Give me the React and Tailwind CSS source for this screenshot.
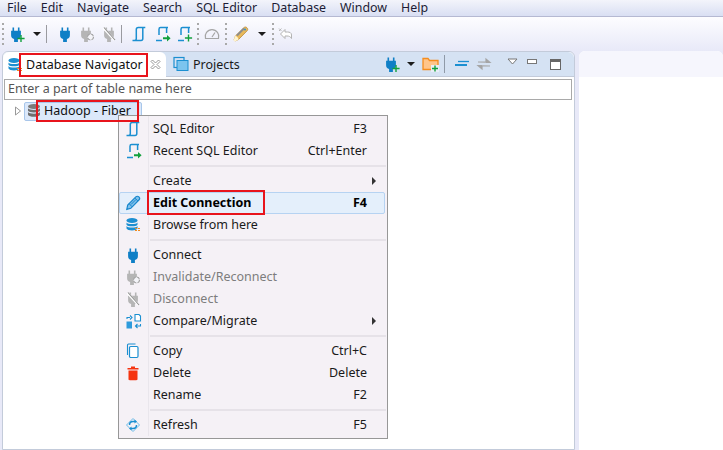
const font = { fontFamily: '"Noto Sans", "Open Sans", sans-serif' };

const Plug = ({ c = "#0f7fc6", x = 0, y = 0, s = 1 }) => (
  <path transform={`translate(${x} ${y}) scale(${s})`} d="M4.5 1.5h1.6v3.2h3.8V1.5h1.6v3.2h1.4v4.6c0 2-1.2 3.4-3 3.8v2.9H6.1v-2.9c-1.8-.4-3-1.8-3-3.8V4.7h1.4z" fill={c} />
);
const PlusG = ({ x, y, r = 3.6 }) => (
  <path d={`M${x - r} ${y}h${2 * r}M${x} ${y - r}v${2 * r}`} stroke="#12a03c" strokeWidth="1.4" fill="none" />
);
const I = ({ children, w = 16, h = 16, className = "" }) => (
  <svg width={w} height={h} viewBox={`0 0 ${w} ${h}`} className={`shrink-0 ${className}`}>{children}</svg>
);
const PlugAdd = () => (
  <I w={17} h={17}><Plug x={-1} /><PlusG x={12} y={12.5} /></I>
);
const PlugBlue = () => <I><Plug /></I>;
const PlugReconnect = () => (
  <I w={17}>
    <Plug c="#b5b5b5" x={-1} />
    <circle cx="11.5" cy="11" r="3" fill="#f4f4f8" stroke="#9d9d9d" strokeWidth="1.1" strokeDasharray="3.5 1.2" />
  </I>
);
const PlugOff = () => (
  <I>
    <Plug c="#b5b5b5" />
    <path d="M2.5 2l11 12" stroke="#fff" strokeWidth="2.4" />
    <path d="M3 1.5l11 12.5" stroke="#8e8e8e" strokeWidth="1.1" />
  </I>
);
const SqlEditor = () => (
  <I w={17}>
    <path d="M3.500 14.500c1.400 0 1.800-.8 1.800-2V3.600c0-1.200.7-2 2-2h7M1.500 14.500h8.500c1.200 0 1.800-.8 1.800-2V2" fill="none" stroke="#1b8fd1" strokeWidth="1.500" />
  </I>
);
const SqlRecent = () => (
  <I w={17}>
    <path d="M5 9V3.200c0-1 .6-1.600 1.600-1.600H14M2 14.500h6M12.600 2v5" fill="none" stroke="#1b8fd1" strokeWidth="1.500" />
    <path d="M9 11.200h4V9l3.600 3.200-3.600 3.200v-2.200H9z" fill="#12a03c" />
  </I>
);
const SqlNew = () => (
  <I w={17}>
    <path d="M5 9V3.200c0-1 .6-1.600 1.600-1.600H14M2 14.500h6M12.600 2v5" fill="none" stroke="#1b8fd1" strokeWidth="1.500" />
    <PlusG x={12.500} y={12} />
  </I>
);
const Gauge = () => (
  <I w={18}>
    <path d="M2.500 12.500a6.800 6.800 0 1 1 13 0z" fill="none" stroke="#a5a5a5" strokeWidth="1.200" />
    <path d="M9 11l3-4.500" stroke="#a5a5a5" strokeWidth="1.200" />
  </I>
);
const Pencil = () => (
  <I w={18} h={18}>
    <path d="M3 16l-1-.9 1.400-4.100L12 2.600c1-.9 2-.8 3 .2s1 2 .1 3L6.600 14.400z" fill="#e9b95a" stroke="#b98a3a" strokeWidth=".8" />
    <path d="M3 11c1.800.2 3.200 1.600 3.600 3.400L3 16.400 1.600 15.500z" fill="#fff4cf" />
    <path d="M5 10.500l7-7" stroke="#8d8d8d" strokeWidth="1.800" />
    <circle cx="13" cy="4.500" r="1" fill="#2f8fd1" />
  </I>
);
const PencilBlue = () => (
  <I w={16} h={16}>
    <path d="M1.800 14.400l.9-4.400L10.800 1.900c.9-.9 2.200-.9 3.100 0s.9 2.200 0 3.100L5.800 13.300z" fill="#7fc1ec" stroke="#1787cc" strokeWidth="1.200" />
    <path d="M4.200 8.800l3 3M9.800 3l3 3M6 9.500l5-5" stroke="#1787cc" strokeWidth="1" />
  </I>
);
const Back = () => (
  <I w={18}>
    <path d="M8 3.500L3.500 8 8 12.500V10h2c2 0 3.500.7 4.500 2.500V9c0-2.300-2-3-4-3H8z" fill="#fff" stroke="#b3b3b3" strokeWidth="1" />
    <path d="M2 2.500L4.500 5M4.500 2.500L2 5" stroke="#b3b3b3" strokeWidth=".9" />
  </I>
);
const Caret = () => <span className="block w-0 h-0 border-l-[4px] border-r-[4px] border-t-[4px] border-l-transparent border-r-transparent border-t-[#1c1c1c]" />;
const Grip = () => (
  <span className="flex flex-col gap-[3px] w-[2px] shrink-0">
    {[0, 1, 2, 3, 4].map((i) => <span key={i} className="w-[2px] h-[2px] bg-[#a9a9a9]" />)}
  </span>
);
const VSep = () => <span className="block w-px h-[18px] bg-[#9a9aa0] shrink-0" />;

const DbBlue = () => (
  <I>
    <ellipse cx="7" cy="3.500" rx="5.500" ry="2.500" fill="#1b8fd1" />
    <path d="M1.500 5.500c1 2 10 2 11 0v2.300c-1 2-10 2-11 0zM1.500 9c1 2 10 2 11 0v2.500c-1 2.600-10 2.600-11 0z" fill="#1b8fd1" />
    <path d="M10 13.500h2M13 13.500h2M10 11.500h2M13 11.500h2" stroke="#ef8a1f" strokeWidth="1" />
  </I>
);
const DbGray = () => (
  <I>
    <ellipse cx="8" cy="3.500" rx="6" ry="2.500" fill="#7b7b7b" />
    <path d="M2 5.300c1 2.200 11 2.200 12 0v2.500c-1 2.200-11 2.200-12 0zM2 9c1 2.200 11 2.200 12 0v2.800c-1 2.700-11 2.700-12 0z" fill="#6f6f6f" />
  </I>
);
const Projects = () => (
  <I>
    <rect x="1" y="1.500" width="10" height="10" fill="none" stroke="#1b8fd1" strokeWidth="1.200" />
    <rect x="4" y="4.500" width="11" height="10" fill="#7cc4ee" stroke="#1b8fd1" strokeWidth="1" />
  </I>
);
const FolderAdd = () => (
  <I w={17} h={16}>
    <path d="M1 13.500V2.500h5l1.500 2H16v9z" fill="#ffc58a" stroke="#f58d1e" strokeWidth="1.300" />
    <rect x="9" y="9" width="8" height="7" fill="#e9eef6" />
    <PlusG x={13} y={12.500} r={3} />
  </I>
);
const Collapse = () => (
  <I>
    <path d="M4 5.500h11" stroke="#1b8fd1" strokeWidth="1.300" />
    <path d="M1 9h12" stroke="#1b8fd1" strokeWidth="2" />
  </I>
);
const LinkArrows = () => (
  <I>
    <path d="M2 6h8V3l4 3.500H10M14 10H6v3l-4-3.500h4" fill="#a5a5a5" stroke="#a5a5a5" strokeWidth="1.200" />
  </I>
);
const Compare = () => (
  <I w={17} h={17}>
    <rect x="1.500" y="8.500" width="5.500" height="7" fill="#2e9bdc" />
    <path d="M10 1.500h4L15.500 3v5H10z" fill="#fff" stroke="#1b8fd1" strokeWidth="1.100" />
    <path d="M2 6V4.500h3M5 2.500l2 2-2 2M15.500 11v2H11M12.500 11l-2 2 2 2" fill="none" stroke="#1b8fd1" strokeWidth="1.100" />
  </I>
);
const Copy = () => (
  <I>
    <path d="M2.500 12V2c0-.6.4-1 1-1h7" fill="none" stroke="#1b8fd1" strokeWidth="1.100" />
    <rect x="4.500" y="3.500" width="8.500" height="11" rx="1.200" fill="#fff" stroke="#1b8fd1" strokeWidth="1.200" />
  </I>
);
const Trash = () => (
  <I>
    <path d="M6 1.500h4V3h3.500v1.500h-11V3H6zM3.500 5.500h9V14c0 .8-.5 1.200-1.200 1.200H4.700c-.7 0-1.200-.4-1.200-1.200z" fill="#f5330f" />
  </I>
);
const Refresh = () => (
  <I>
    <path d="M1.500 8L8 1.500 14.500 8 8 14.500z" fill="none" stroke="#6dbbe8" strokeWidth="1" />
    <path d="M4.500 8c0-2 1.500-3.500 3.500-3.500h2M11.500 8c0 2-1.500 3.500-3.500 3.500H6" fill="none" stroke="#1b8fd1" strokeWidth="1.500" />
    <path d="M9.500 2.500l2.500 2-2.500 2zM6.500 9.500L4 11.500l2.500 2z" fill="#1b8fd1" />
  </I>
);

const MenuRow = ({ icon, label, shortcut, disabled, arrow, active }) => (
  <div className={`relative flex items-center h-[22px] ${active ? "bg-[#e4effb] border border-[#b6d3f2] rounded-[2px] -ml-[1px] mr-[2px] font-bold" : ""}`}>
    <span className="w-[26px] flex justify-center shrink-0">{icon}</span>
    <span className={`ml-[7px] flex-1 ${active ? "text-black" : disabled ? "text-[#7d7d7d]" : "text-[#1a1a1a]"}`}>{label}</span>
    {shortcut && <span className={`${active ? "mr-[17px] text-black" : "mr-[20px] text-[#1a1a1a]"}`}>{shortcut}</span>}
    {arrow && <span className="block mr-[11px] w-0 h-0 border-t-[4px] border-b-[4px] border-l-[4px] border-t-transparent border-b-transparent border-l-[#333]" />}
  </div>
);
const MenuSep = () => (
  <div className="flex h-[8px] items-center"><span className="ml-[30px] flex-1 h-[2px] bg-[#e6e2e8] mr-[1px]" /></div>
);

export default function App() {
  return (
    <div style={font} className="relative w-[723px] h-[450px] overflow-hidden bg-white text-[12.5px] text-[#1a1a1a]">
      <div className="h-[17px] bg-gradient-to-b from-[#f3f4fb] to-[#d9dff3] border-b border-[#b5b9d2] flex items-center pl-[7px] gap-[14px] text-[12.4px] text-[#1c1c36]">
        {["File", "Edit", "Navigate", "Search", "SQL Editor", "Database", "Window", "Help"].map((m) => <span key={m} className="leading-[14px]">{m}</span>)}
      </div>
      <div className="h-[34px] bg-gradient-to-b from-[#fdfdff] to-[#e8e9f8] flex items-center pl-[2px]">
        <Grip />
        <span className="ml-[5px]"><PlugAdd /></span>
        <span className="ml-[7px]"><Caret /></span>
        <span className="ml-[5px]"><VSep /></span>
        <span className="ml-[10px]"><PlugBlue /></span>
        <span className="ml-[6px]"><PlugReconnect /></span>
        <span className="ml-[5px]"><PlugOff /></span>
        <span className="ml-[4px]"><VSep /></span>
        <span className="ml-[9px]"><SqlEditor /></span>
        <span className="ml-[6px]"><SqlRecent /></span>
        <span className="ml-[5px]"><SqlNew /></span>
        <span className="ml-[4px]"><Grip /></span>
        <span className="ml-[4px]"><Gauge /></span>
        <span className="ml-[4px]"><Grip /></span>
        <span className="ml-[5px]"><Pencil /></span>
        <span className="ml-[8px]"><Caret /></span>
        <span className="ml-[6px]"><Grip /></span>
        <span className="ml-[3px]"><Back /></span>
      </div>
      <div className="flex h-[399px] bg-[#e8e9f8] pl-[2px] gap-[4px]">
        <div className="w-[573px] rounded-t-[6px] border border-[#c3cbda] bg-white flex flex-col">
          <div className="h-[25px] bg-[#d5e2f3] rounded-t-[6px] flex border-b border-[#c3cbda]">
            <div className="w-[163px] h-[25px] bg-white rounded-t-[6px] flex items-center pl-[4px] relative">
              <DbBlue />
              <span className="ml-[3px] pt-[2px] text-[#111]">Database Navigator</span>
              <svg width="11" height="11" viewBox="0 0 11 11" className="absolute right-[5px] top-[7px]">
                <path d="M1 2.500L2.500 1l3 3 3-3L10 2.500l-3 3 3 3L8.500 10l-3-3-3 3L1 8.500l3-3z" fill="#fff" stroke="#8a8a8a" strokeWidth=".9" />
              </svg>
            </div>
            <div className="flex items-center ml-[7px]">
              <Projects />
              <span className="ml-[4px] pt-[2px] text-[#1a1a1a]">Projects</span>
            </div>
            <div className="ml-auto flex items-center pr-[13px]">
              <PlugAdd />
              <span className="ml-[6px]"><Caret /></span>
              <span className="ml-[7px]"><FolderAdd /></span>
              <span className="ml-[5px] block w-px h-[18px] bg-[#8f9aa8]" />
              <span className="ml-[9px]"><Collapse /></span>
              <span className="ml-[6px]"><LinkArrows /></span>
              <span className="ml-[15px] mb-[5px]">
                <svg width="11" height="7" viewBox="0 0 11 7"><path d="M1 1h9L5.500 6z" fill="#fff" stroke="#777" /></svg>
              </span>
              <span className="ml-[9px] mb-[5px] block w-[10px] h-[5px] border border-[#777] bg-white" />
              <span className="ml-[13px] block w-[11px] h-[11px] border border-[#666] border-t-[3px] bg-white" />
            </div>
          </div>
          <div className="mt-[2px] mx-[1px] mr-[2px] h-[21px] border border-[#a9a9a9] flex items-center pl-[3px] text-[#555]">Enter a part of table name here</div>
          <div className="flex items-center h-[20px] pl-[11px] mt-[1px]">
            <svg width="8" height="10" viewBox="0 0 8 10"><path d="M1.500 1l5 4-5 4z" fill="#fff" stroke="#999" /></svg>
            <span className="ml-[2px] flex items-center h-[19px] w-[118px] bg-[#dbe8fa] border border-[#a8c6ea] rounded-[2px] pl-[1px]">
              <DbGray />
              <span className="ml-[2px] text-[#111] whitespace-nowrap">Hadoop - Fiber</span>
            </span>
          </div>
        </div>
        <div className="flex-1 rounded-t-[6px] bg-white flex flex-col">
          <div className="h-[26px] rounded-t-[6px] bg-[#f6f6fd]" />
        </div>
      </div>

      <div className="absolute left-[118px] top-[115px] w-[270px] h-[324px] bg-[#f5f1f6] border border-[#979797] pt-[2px] pl-[1px]">
        <div className="absolute left-[29px] top-0 bottom-[2px] w-[1px] bg-[#e9e6ec]" />
        <MenuRow icon={<SqlEditor />} label="SQL Editor" shortcut="F3" />
        <MenuRow icon={<SqlRecent />} label="Recent SQL Editor" shortcut="Ctrl+Enter" />
        <MenuSep />
        <MenuRow label="Create" arrow />
        <MenuRow icon={<PencilBlue />} label="Edit Connection" shortcut="F4" active />
        <MenuRow icon={<DbBlue />} label="Browse from here" />
        <MenuSep />
        <MenuRow icon={<PlugBlue />} label="Connect" />
        <MenuRow icon={<PlugReconnect />} label="Invalidate/Reconnect" disabled />
        <MenuRow icon={<PlugOff />} label="Disconnect" disabled />
        <MenuRow icon={<Compare />} label="Compare/Migrate" arrow />
        <MenuSep />
        <MenuRow icon={<Copy />} label="Copy" shortcut="Ctrl+C" />
        <MenuRow icon={<Trash />} label="Delete" shortcut="Delete" />
        <MenuRow label="Rename" shortcut="F2" />
        <MenuSep />
        <MenuRow icon={<Refresh />} label="Refresh" shortcut="F5" />
      </div>

      <div className="absolute left-[19px] top-[53px] w-[129px] h-[24px] border-2 border-[#e8141c]" />
      <div className="absolute left-[36px] top-[100px] w-[103px] h-[22px] border-2 border-[#e8141c]" />
      <div className="absolute left-[147px] top-[190px] w-[118px] h-[25px] border-2 border-[#e8141c]" />
    </div>
  );
}
